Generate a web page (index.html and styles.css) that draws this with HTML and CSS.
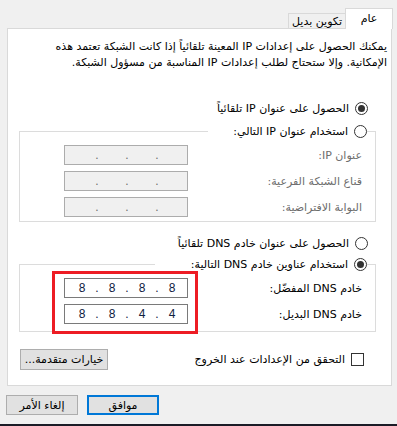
FILE: index.html
```html
<!DOCTYPE html>
<html lang="ar" dir="rtl">
  <head>
    <meta charset="UTF-8" />
    <title>خصائص الإصدار 4 من بروتوكول الإنترنت</title>
    <link rel="stylesheet" href="styles.css">
  </head>
  <body>
    <div class="dialog">
      <div class="tabs">
        <div class="tab tab-active">عام</div>
        <div class="tab">تكوين بديل</div>
      </div>

      <div class="panel">
        <p class="intro">يمكنك الحصول على إعدادات IP المعينة تلقائياً إذا كانت الشبكة تعتمد هذه الإمكانية. وإلا ستحتاج لطلب إعدادات IP المناسبة من مسؤول الشبكة.</p>

        <div class="option option-top">
          <span class="radio checked"></span>
          <span>الحصول على عنوان IP تلقائياً</span>
        </div>

        <fieldset class="group group-ip">
          <legend class="option legend-ip">
            <span class="radio"></span>
            <span>استخدام عنوان IP التالي:</span>
          </legend>
          <div class="field-row disabled">
            <span class="field-label">عنوان IP:</span>
            <div class="ip-box" dir="ltr"><span class="seg"></span><span class="dot">.</span><span class="seg"></span><span class="dot">.</span><span class="seg"></span><span class="dot">.</span><span class="seg"></span></div>
          </div>
          <div class="field-row disabled">
            <span class="field-label">قناع الشبكة الفرعية:</span>
            <div class="ip-box" dir="ltr"><span class="seg"></span><span class="dot">.</span><span class="seg"></span><span class="dot">.</span><span class="seg"></span><span class="dot">.</span><span class="seg"></span></div>
          </div>
          <div class="field-row disabled">
            <span class="field-label">البوابة الافتراضية:</span>
            <div class="ip-box" dir="ltr"><span class="seg"></span><span class="dot">.</span><span class="seg"></span><span class="dot">.</span><span class="seg"></span><span class="dot">.</span><span class="seg"></span></div>
          </div>
        </fieldset>

        <div class="option option-dns">
          <span class="radio"></span>
          <span>الحصول على عنوان خادم DNS تلقائياً</span>
        </div>

        <fieldset class="group group-dns">
          <legend class="option legend-dns">
            <span class="radio checked"></span>
            <span>استخدام عناوين خادم DNS التالية:</span>
          </legend>
          <div class="field-row">
            <span class="field-label">خادم DNS المفضّل:</span>
            <div class="ip-box" dir="ltr"><span class="seg">8</span><span class="dot">.</span><span class="seg">8</span><span class="dot">.</span><span class="seg">8</span><span class="dot">.</span><span class="seg">8</span></div>
          </div>
          <div class="field-row">
            <span class="field-label">خادم DNS البديل:</span>
            <div class="ip-box" dir="ltr"><span class="seg">8</span><span class="dot">.</span><span class="seg">8</span><span class="dot">.</span><span class="seg">4</span><span class="dot">.</span><span class="seg">4</span></div>
          </div>
        </fieldset>

        <div class="footer-row">
          <div class="option">
            <span class="checkbox"></span>
            <span>التحقق من الإعدادات عند الخروج</span>
          </div>
          <button class="btn btn-advanced">خيارات متقدمة...</button>
        </div>
      </div>

      <div class="actions">
        <button class="btn btn-ok">موافق</button>
        <button class="btn">إلغاء الأمر</button>
      </div>
    </div>

    <!-- red highlight drawn over the DNS fields -->
    <div class="highlight"></div>
    <div class="taskbar"></div>
  </body>
</html>
```

FILE: styles.css
```css
* {
  box-sizing: border-box;
  margin: 0;
  padding: 0;
}

html,
body {
  width: 397px;
  height: 426px;
  overflow: hidden;
}

body {
  font-family: "DejaVu Sans", sans-serif;
  font-size: 11px;
  color: #000;
  background-color: #f0f0f0;
  position: relative;
}

.dialog {
  padding-top: 8px;
  height: 424px;
}

/* --- tabs --- */
.tabs {
  display: flex;
  align-items: flex-end;
  height: 20px;
  padding-right: 4px;
}
.tab {
  width: 57px;
  height: 15px;
  border: 1px solid #d9d9d9;
  border-bottom: none;
  border-right: none;
  background-color: #f0f0f0;
  display: flex;
  align-items: center;
  justify-content: center;
  font-size: 11px;
}
.tab-active {
  width: 48px;
  height: 21px;
  margin-bottom: -1px;
  border-right: 1px solid #d9d9d9;
  border-left: 1px solid #d9d9d9;
  background-color: #fff;
  position: relative;
  z-index: 1;
  padding-bottom: 2px;
}

/* --- main panel --- */
.panel {
  margin: 0 5px 0 7px;
  height: 358px;
  background-color: #fff;
  border: 1px solid #d9d9d9;
  padding-top: 10px;
}

.intro {
  line-height: 16px;
  padding: 0 4px 0 8px;
}

.option {
  display: flex;
  align-items: center;
  gap: 6px;
  height: 16px;
}
.option-top {
  margin-top: 29px;
  padding-right: 23px;
}
.option-dns {
  margin-top: 13px;
  padding-right: 23px;
}

.radio {
  width: 13px;
  height: 13px;
  border: 1px solid #333;
  border-radius: 50%;
  background-color: #fff;
  flex-shrink: 0;
  display: flex;
  align-items: center;
  justify-content: center;
}
.radio.checked::before {
  content: "";
  width: 7px;
  height: 7px;
  border-radius: 50%;
  background-color: #333;
}

.checkbox {
  width: 13px;
  height: 13px;
  border: 1px solid #333;
  background-color: #fff;
  flex-shrink: 0;
}

/* --- group boxes --- */
.group {
  margin: 7px 15px 0 11px;
  border: 1px solid #dcdcdc;
  padding: 6px 8px 4px 0;
  min-width: 0;
}
.group legend {
  padding: 0;
}
.legend-ip {
  width: 159px;
}
.legend-dns {
  width: 212px;
}
.group-dns {
  margin-top: 5px;
  padding-bottom: 7px;
}

.field-row {
  display: flex;
  align-items: center;
  justify-content: space-between;
  height: 20px;
  padding: 0 5px 0 44px;
}
.field-row + .field-row {
  margin-top: 6px;
}
.field-label {
  white-space: nowrap;
}
.disabled .field-label {
  color: #6d6d6d;
}

.ip-box {
  width: 124px;
  height: 20px;
  border: 1px solid #7a7a7a;
  background-color: #fff;
  display: flex;
  align-items: center;
  padding-left: 5px;
  font-family: "Liberation Sans", sans-serif;
  font-size: 12px;
  color: #102040;
}
.disabled .ip-box {
  border-color: #acacac;
  background-color: #f0f0f0;
  color: #6d6d6d;
}
.seg {
  width: 24px;
  text-align: center;
}
.dot {
  width: 6px;
  text-align: center;
}

/* --- bottom of the panel --- */
.footer-row {
  display: flex;
  align-items: center;
  justify-content: space-between;
  margin-top: 17px;
  padding: 0 27px 0 12px;
}

.btn {
  font-family: "DejaVu Sans", sans-serif;
  font-size: 11px;
  color: #000;
  background-color: #e1e1e1;
  border: 1px solid #adadad;
  height: 21px;
}
.btn-advanced {
  width: 88px;
}

.actions {
  display: flex;
  justify-content: flex-end;
  gap: 9px;
  padding-left: 6px;
  margin-top: 9px;
}
.actions .btn {
  width: 72px;
  height: 20px;
}
.actions .btn-ok {
  border: 2px solid #0078d7;
}

.highlight {
  position: absolute;
  left: 52px;
  top: 271px;
  width: 146px;
  height: 63px;
  border: 3px solid #ed1c24;
}

.taskbar {
  position: absolute;
  left: 0;
  bottom: 0;
  width: 100%;
  height: 2px;
  background-color: #1b1b26;
}
```
